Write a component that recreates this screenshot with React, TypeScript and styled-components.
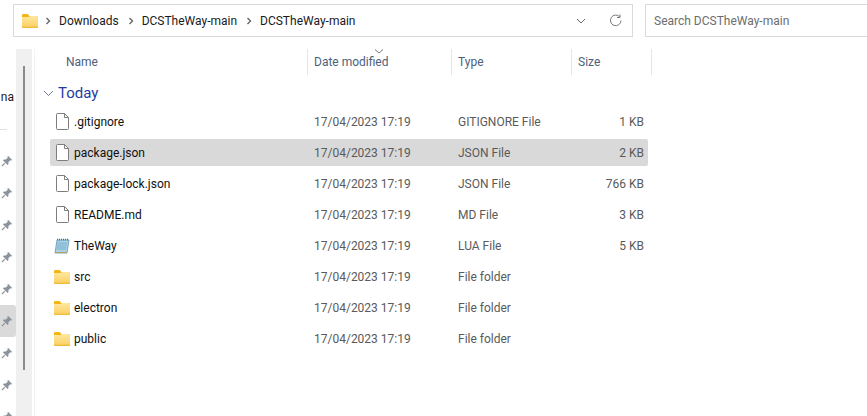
import React from 'react'
import styled, { createGlobalStyle } from 'styled-components'

const GlobalStyle = createGlobalStyle`
  html, body {
    margin: 0;
    padding: 0;
    background: #ffffff;
    overflow: hidden;
  }
`

const Window = styled.div`
  width: 867px;
  height: 416px;
  overflow: hidden;
  display: flex;
  flex-direction: column;
  font-family: "Roboto", "Noto Sans", sans-serif;
  font-size: 12px;
  color: #1a1a1a;
`

const TopBar = styled.div`
  height: 49px;
  flex: none;
  box-sizing: border-box;
  padding: 4px 0 12px 13px;
  display: flex;
  gap: 12px;
`

const AddressBar = styled.div`
  width: 620px;
  box-sizing: border-box;
  border: 1px solid #d9d9d9;
  display: flex;
  align-items: center;
  padding-left: 8px;
`

const AddressFolder = styled.span`
  display: flex;
  margin-right: -2px;
`

const Crumb = styled.span`
  color: #1a1a1a;
  white-space: nowrap;
`

const CrumbArrow = styled.svg`
  width: 6px;
  height: 8px;
  margin: 0 8px 0 9px;
  flex: none;
`

const AddressTools = styled.div`
  margin-left: auto;
  display: flex;
  align-items: center;
  gap: 23px;
  padding-right: 10px;
`

const SearchBox = styled.div`
  flex: 1;
  box-sizing: border-box;
  border: 1px solid #d9d9d9;
  border-right: none;
  display: flex;
  align-items: center;
  padding-left: 8px;
  color: #6d6d6d;
  white-space: nowrap;
`

const Body = styled.div`
  flex: 1;
  min-height: 0;
  display: flex;
`

const NavPane = styled.div`
  width: 16px;
  flex: none;
  display: flex;
  flex-direction: column;
  overflow: hidden;
`

const NavLabel = styled.div`
  height: 80px;
  flex: none;
  box-sizing: border-box;
  padding-top: 41px;
  margin-right: 2px;
  text-align: right;
  white-space: nowrap;
  line-height: 14px;
  color: #1a1a1a;
`

const NavDivider = styled.div`
  height: 1px;
  width: 7px;
  flex: none;
  background: #e0e0e0;
`

const PinList = styled.div`
  display: flex;
  flex-direction: column;
  padding-top: 15px;
`

const PinItem = styled.div<{ $active?: boolean }>`
  height: 32px;
  flex: none;
  display: flex;
  align-items: center;
  padding-left: 1px;
  box-sizing: border-box;
  border-radius: 0 3px 3px 0;
  background: ${(p) => (p.$active ? '#dadada' : 'transparent')};
`

const ScrollTrack = styled.div`
  width: 16px;
  flex: none;
  background: #f0f0f0;
  display: flex;
  justify-content: center;
  padding-top: 17px;
  box-sizing: border-box;
  height: 367px;
`

const ScrollThumb = styled.div`
  width: 2px;
  height: 304px;
  background: #8a8a8a;
`

const Content = styled.div`
  flex: 1;
  min-width: 0;
  margin-left: 2px;
  border-left: 1px solid #f2f2f2;
  padding-left: 15px;
`

const HeaderRow = styled.div`
  display: grid;
  grid-template-columns: 258px 144px 120px 80px;
  height: 25px;
`

const HeaderCell = styled.div<{ $first?: boolean }>`
  box-sizing: border-box;
  padding-left: ${(p) => (p.$first ? '16px' : '6px')};
  border-right: 1px solid #e5e5e5;
  line-height: 26px;
  color: #4c607a;
  position: relative;
  white-space: nowrap;
`

const SortArrow = styled.svg`
  position: absolute;
  left: 66px;
  top: 0;
  width: 10px;
  height: 5px;
`

const GroupRow = styled.div`
  height: 34px;
  box-sizing: border-box;
  padding-top: 4px;
  display: flex;
  align-items: center;
  gap: 4px;
  margin-left: -7px;
  font-size: 15px;
  color: #1c3d9c;
`

const FileList = styled.div`
  display: flex;
  flex-direction: column;
  gap: 4px;
`

const FileRow = styled.div<{ $selected?: boolean }>`
  display: grid;
  grid-template-columns: 258px 144px 120px 76px;
  height: 27px;
  align-items: center;
  border-radius: 2px;
  width: 598px;
  background: ${(p) => (p.$selected ? '#d9d9d9' : 'transparent')};
`

const NameCell = styled.div`
  display: flex;
  align-items: center;
  padding-left: 4px;
  gap: 4px;
  color: #101010;
`

const IconSlot = styled.span`
  width: 16px;
  height: 18px;
  display: flex;
  align-items: center;
  justify-content: center;
  flex: none;
`

const InfoCell = styled.div`
  padding-left: 6px;
  color: #5a5a5a;
  white-space: nowrap;
`

const SizeCell = styled.div`
  text-align: right;
  padding-right: 4px;
  color: #5a5a5a;
  white-space: nowrap;
`

function ChevronRight() {
  return (
    <CrumbArrow viewBox="0 0 6 8">
      <path d="M1.5 1 L4.5 4 L1.5 7" fill="none" stroke="#666666" strokeWidth="1.4" />
    </CrumbArrow>
  )
}

function FolderIcon({ id }: { id: string }) {
  return (
    <svg width="16" height="14" viewBox="0 0 16 14">
      <defs>
        <linearGradient id={id} x1="0" y1="0" x2="0" y2="1">
          <stop offset="0" stopColor="#ffe8a0" />
          <stop offset="1" stopColor="#fbcf62" />
        </linearGradient>
      </defs>
      <path d="M0 1.2 Q0 0 1.2 0 H5.5 L7.5 2 H16 V3 H0 Z" fill="#f5b50f" />
      <path d="M0 3 H6.5 L8 2 H14.8 Q16 2 16 3.2 V12.6 Q16 13.6 15 13.6 H1 Q0 13.6 0 12.6 Z" fill={`url(#${id})`} />
      <rect x="0" y="12.8" width="16" height="1" fill="#e9b022" />
    </svg>
  )
}

function FileIcon() {
  return (
    <svg width="13" height="17" viewBox="0 0 13 17">
      <path d="M0.5 1.5 Q0.5 0.5 1.5 0.5 H8.5 L12.5 4.5 V15.5 Q12.5 16.5 11.5 16.5 H1.5 Q0.5 16.5 0.5 15.5 Z" fill="#ffffff" stroke="#7d7d7d" />
      <path d="M8.5 0.5 V4.5 H12.5" fill="none" stroke="#7d7d7d" />
    </svg>
  )
}

function LuaIcon() {
  return (
    <svg width="16" height="16" viewBox="0 0 16 16">
      <path d="M3 2 H15 L13 15 H1 Z" fill="#a9d3e6" stroke="#5f93ad" strokeWidth="0.8" />
      <path d="M3 14 H13.2 L13 15 H1 Z" fill="#b9a05c" />
      <path d="M3 1.5 H15" stroke="#4d6f86" strokeWidth="1.4" strokeDasharray="1 1" />
      <path d="M3.6 5 H13 M3.3 7 H12.7 M3 9 H12.4 M2.7 11 H12.1" stroke="#6fa8c4" strokeWidth="0.8" />
    </svg>
  )
}

function PinIcon() {
  return (
    <svg width="12" height="12" viewBox="0 0 12 12">
      <path d="M7 0.8 L11.2 5 L10.2 5.6 L9.4 5.2 L7.4 7.2 L7.4 9.4 L6.6 10 L2 5.4 L2.6 4.6 L4.8 4.6 L6.8 2.6 L6.4 1.8 Z" fill="#8c939b" />
      <path d="M3.8 8.2 L1 11" stroke="#8c939b" strokeWidth="1.2" />
    </svg>
  )
}

const files = [
  { name: '.gitignore', type: 'GITIGNORE File', size: '1 KB', kind: 'file' },
  { name: 'package.json', type: 'JSON File', size: '2 KB', kind: 'file', selected: true },
  { name: 'package-lock.json', type: 'JSON File', size: '766 KB', kind: 'file' },
  { name: 'README.md', type: 'MD File', size: '3 KB', kind: 'file' },
  { name: 'TheWay', type: 'LUA File', size: '5 KB', kind: 'lua' },
  { name: 'src', type: 'File folder', size: '', kind: 'folder' },
  { name: 'electron', type: 'File folder', size: '', kind: 'folder' },
  { name: 'public', type: 'File folder', size: '', kind: 'folder' },
]

const pins = [0, 1, 2, 3, 4, 5, 6, 7, 8]

function App() {
  return (
    <Window>
      <GlobalStyle />
      <TopBar>
        <AddressBar>
          <AddressFolder>
            <FolderIcon id="folder-address" />
          </AddressFolder>
          <ChevronRight />
          <Crumb>Downloads</Crumb>
          <ChevronRight />
          <Crumb>DCSTheWay-main</Crumb>
          <ChevronRight />
          <Crumb>DCSTheWay-main</Crumb>
          <AddressTools>
            <svg width="10" height="6" viewBox="0 0 10 6">
              <path d="M1 1 L5 5 L9 1" fill="none" stroke="#6b6b6b" strokeWidth="1" />
            </svg>
            <svg width="13" height="13" viewBox="0 0 13 13">
              <path d="M10.8 3 A5.3 5.3 0 1 0 12 6.5" fill="none" stroke="#7a7a7a" strokeWidth="1" />
              <path d="M11 0.5 V3.5 H8" fill="none" stroke="#7a7a7a" strokeWidth="1" />
            </svg>
          </AddressTools>
        </AddressBar>
        <SearchBox>Search DCSTheWay-main</SearchBox>
      </TopBar>
      <Body>
        <NavPane>
          <NavLabel>na</NavLabel>
          <NavDivider />
          <PinList>
            {pins.map((p) => (
              <PinItem key={p} $active={p === 5}>
                <PinIcon />
              </PinItem>
            ))}
          </PinList>
        </NavPane>
        <ScrollTrack>
          <ScrollThumb />
        </ScrollTrack>
        <Content>
          <HeaderRow>
            <HeaderCell $first>Name</HeaderCell>
            <HeaderCell>
              Date modified
              <SortArrow viewBox="0 0 10 5">
                <path d="M1 0.5 L5 4 L9 0.5" fill="none" stroke="#7a7a7a" strokeWidth="1" />
              </SortArrow>
            </HeaderCell>
            <HeaderCell>Type</HeaderCell>
            <HeaderCell>Size</HeaderCell>
          </HeaderRow>
          <GroupRow>
            <svg width="11" height="7" viewBox="0 0 11 7">
              <path d="M1 1 L5.5 5.5 L10 1" fill="none" stroke="#6f7f99" strokeWidth="1" />
            </svg>
            Today
          </GroupRow>
          <FileList>
            {files.map((f) => (
              <FileRow key={f.name} $selected={f.selected}>
                <NameCell>
                  <IconSlot>
                    {f.kind === 'file' && <FileIcon />}
                    {f.kind === 'lua' && <LuaIcon />}
                    {f.kind === 'folder' && <FolderIcon id={`folder-${f.name}`} />}
                  </IconSlot>
                  {f.name}
                </NameCell>
                <InfoCell>17/04/2023 17:19</InfoCell>
                <InfoCell>{f.type}</InfoCell>
                <SizeCell>{f.size}</SizeCell>
              </FileRow>
            ))}
          </FileList>
        </Content>
      </Body>
    </Window>
  )
}

export default App
